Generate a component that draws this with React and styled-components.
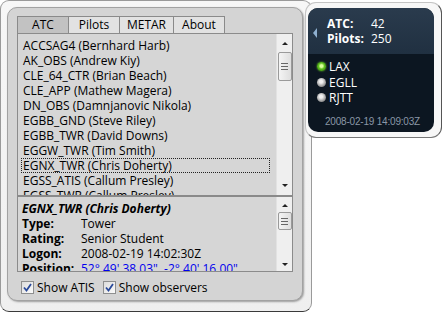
import React from "react";
import styled, { createGlobalStyle } from "styled-components";

const Global = createGlobalStyle`
  html, body { margin: 0; padding: 0; background: #ffffff; }
  body { font-family: "Open Sans", "Noto Sans", sans-serif; font-size: 12px; color: #000; }
  * { box-sizing: border-box; }
`;

const Desktop = styled.div`
  position: relative;
  width: 442px;
  height: 312px;
  overflow: hidden;
  background: #ffffff;
`;

const MainGadget = styled.div`
  position: absolute;
  left: 0;
  top: 0;
  width: 312px;
  height: 312px;
  padding: 6px 8px 10px 6px;
  background: linear-gradient(#f7f7f7, #efefef);
  border: 1px solid #9a9a9a;
  border-bottom-color: #3a3a3a;
  border-radius: 9px;
  display: flex;
`;

const Panel = styled.div`
  flex: 1;
  display: flex;
  flex-direction: column;
  padding: 8px 9px 0 9px;
  background: #d4d4d4;
  border: 1px solid #a2a2a2;
  border-radius: 10px;
  box-shadow: 1px 1px 2px rgba(0, 0, 0, 0.35);
`;

const Tabs = styled.div`
  display: flex;
  height: 17px;
`;

const Tab = styled.div`
  width: ${(p) => p.$w}px;
  height: 17px;
  line-height: 15px;
  text-align: center;
  background: ${(p) => (p.$active ? "#c2c2c2" : "#e2e2e2")};
  border: 1px solid #8a8a8a;
  border-bottom: none;
  margin-left: ${(p) => (p.$first ? 0 : -1)}px;
  font-size: 12px;
`;

const Box = styled.div`
  display: flex;
  flex-direction: column;
  border: 1px solid #8b8b8b;
  background: #d6d6d6;
  height: 239px;
`;

const Section = styled.div`
  display: flex;
  height: ${(p) => p.$h}px;
  overflow: hidden;
`;

const Divider = styled.div`
  height: 2px;
  background: #8a8a8a;
`;

const ListBody = styled.div`
  flex: 1;
  padding: ${(p) => p.$pt}px 6px 0 3px;
  overflow: hidden;
`;

const Row = styled.div`
  height: 15px;
  line-height: 13px;
  padding-left: 1px;
  white-space: nowrap;
  border: 1px dotted ${(p) => (p.$focus ? "#222" : "transparent")};
  display: flex;
  align-items: center;
`;

const Scrollbar = styled.div`
  width: 16px;
  background: #efefef;
  border-left: 1px solid #e2e2e2;
  display: flex;
  flex-direction: column;
  align-items: center;
  padding-top: ${(p) => p.$pt}px;
`;

const Arrow = styled.div`
  width: 0;
  height: 0;
  border-left: 3px solid transparent;
  border-right: 3px solid transparent;
  ${(p) => (p.$down ? "border-top: 3px solid #222;" : "border-bottom: 3px solid #222;")}
`;

const Thumb = styled.div`
  width: 14px;
  height: ${(p) => p.$h}px;
  margin-top: ${(p) => p.$mt}px;
  border: 1px solid #9a9a9a;
  border-radius: 2px;
  background: linear-gradient(90deg, #f4f4f4, #dedede);
  display: flex;
  flex-direction: column;
  align-items: center;
  justify-content: center;
  gap: 2px;
`;

const Grip = styled.div`
  width: 7px;
  height: 1px;
  background: #666;
`;

const Spacer = styled.div`
  flex: ${(p) => (p.$fixed ? `0 0 ${p.$fixed}px` : 1)};
`;

const Heading = styled.div`
  height: 15px;
  line-height: 15px;
  font-weight: bold;
  font-style: italic;
  padding-left: 1px;
  white-space: nowrap;
`;

const InfoRow = styled.div`
  display: grid;
  grid-template-columns: 59px 1fr;
  height: 15px;
  line-height: 15px;
  padding-left: 1px;
  white-space: nowrap;
`;

const Label = styled.span`
  font-weight: bold;
`;

const Link = styled.a`
  color: #0000ee;
  text-decoration: underline;
`;

const CheckRow = styled.div`
  display: flex;
  align-items: center;
  gap: 8px;
  height: 29px;
  padding: 2px 0 0 4px;
`;

const Check = styled.label`
  display: flex;
  align-items: center;
  gap: 3px;
`;

const Box13 = styled.span`
  width: 13px;
  height: 13px;
  border: 1px solid #8e8f8f;
  background: linear-gradient(135deg, #dcdcdc, #fbfbfb);
  display: flex;
  align-items: center;
  justify-content: center;
`;

const SideGadget = styled.div`
  position: absolute;
  left: 305px;
  top: 2px;
  width: 137px;
  height: 136px;
  padding: 5px 7px 5px 2px;
  background: #f7f7f7;
  border: 1px solid #c4c4c4;
  border-right-color: #555;
  border-bottom-color: #777;
  border-radius: 11px;
  display: flex;
`;

const Dark = styled.div`
  flex: 1;
  border-radius: 10px;
  overflow: hidden;
  display: flex;
  flex-direction: column;
  background: #0c1621;
  color: #fff;
`;

const Header = styled.div`
  height: 46px;
  background: linear-gradient(#2a3b4d, #203041);
  display: flex;
  align-items: center;
  padding-left: 5px;
  gap: 10px;
`;

const LeftArrow = styled.div`
  width: 0;
  height: 0;
  border-top: 5px solid transparent;
  border-bottom: 5px solid transparent;
  border-right: 4px solid #8fb0d0;
  margin-top: 4px;
`;

const Stats = styled.div`
  display: grid;
  grid-template-columns: 44px auto;
  line-height: 15px;
  font-weight: bold;
`;

const Value = styled.span`
  font-weight: normal;
`;

const Airports = styled.div`
  padding: 5px 0 0 9px;
  display: flex;
  flex-direction: column;
`;

const Airport = styled.div`
  display: flex;
  align-items: center;
  gap: 3px;
  height: 15.5px;
  line-height: 15px;
  font-size: 12px;
`;

const Dot = styled.span`
  width: 9px;
  height: 9px;
  border-radius: 50%;
  background: ${(p) =>
    p.$on
      ? "radial-gradient(circle at 50% 45%, #d8ff9a 0 20%, #5fbf1e 45%, #2e7a0c 100%)"
      : "radial-gradient(circle at 45% 40%, #f0f0f0 0 20%, #a0a0a0 60%, #606060 100%)"};
  box-shadow: ${(p) => (p.$on ? "0 0 2px #6fcf2a" : "none")};
`;

const Stamp = styled.div`
  margin-top: 10px;
  padding-left: 17px;
  font-family: "Liberation Sans Narrow", "Liberation Sans", sans-serif;
  font-size: 10px;
  letter-spacing: -0.2px;
  color: #8a96a6;
`;

const items = [
  "ACCSAG4 (Bernhard Harb)",
  "AK_OBS (Andrew Kiy)",
  "CLE_64_CTR (Brian Beach)",
  "CLE_APP (Mathew Magera)",
  "DN_OBS (Damnjanovic Nikola)",
  "EGBB_GND (Steve Riley)",
  "EGBB_TWR (David Downs)",
  "EGGW_TWR (Tim Smith)",
  "EGNX_TWR (Chris Doherty)",
  "EGSS_ATIS (Callum Presley)",
  "EGSS_TWR (Callum Presley)",
];

const Tick = () => (
  <svg width="9" height="9" viewBox="0 0 9 9">
    <path d="M1 4.5 L3.5 7.5 L8 1" fill="none" stroke="#2a4a9a" strokeWidth="1.8" />
  </svg>
);

export default function App() {
  return (
    <Desktop>
      <Global />
      <MainGadget>
        <Panel>
          <Tabs>
            <Tab $w={52} $active $first>ATC</Tab>
            <Tab $w={52}>Pilots</Tab>
            <Tab $w={55}>METAR</Tab>
            <Tab $w={52}>About</Tab>
          </Tabs>
          <Box>
            <Section $h={161}>
              <ListBody $pt={4}>
                {items.map((t, i) => (
                  <Row key={t} $focus={i === 8}>{t}</Row>
                ))}
              </ListBody>
              <Scrollbar $pt={8}>
                <Arrow />
                <Thumb $h={29} $mt={7}>
                  <Grip /><Grip /><Grip />
                </Thumb>
                <Spacer />
                <Arrow $down />
                <Spacer $fixed={8} />
              </Scrollbar>
            </Section>
            <Divider />
            <Section $h={74}>
              <ListBody $pt={4}>
                <Heading>EGNX_TWR (Chris Doherty)</Heading>
                <InfoRow><Label>Type:</Label><span>Tower</span></InfoRow>
                <InfoRow><Label>Rating:</Label><span>Senior Student</span></InfoRow>
                <InfoRow><Label>Logon:</Label><span>2008-02-19 14:02:30Z</span></InfoRow>
                <InfoRow>
                  <Label>Position:</Label>
                  <Link href="#">52° 49' 38.03", -2° 40' 16.00"</Link>
                </InfoRow>
              </ListBody>
              <Scrollbar $pt={7}>
                <Arrow />
                <Thumb $h={18} $mt={5}>
                  <Grip /><Grip /><Grip />
                </Thumb>
                <Spacer />
                <Arrow $down />
                <Spacer $fixed={5} />
              </Scrollbar>
            </Section>
          </Box>
          <CheckRow>
            <Check><Box13><Tick /></Box13>Show ATIS</Check>
            <Check><Box13><Tick /></Box13>Show observers</Check>
          </CheckRow>
        </Panel>
      </MainGadget>
      <SideGadget>
        <Dark>
          <Header>
            <LeftArrow />
            <Stats>
              <span>ATC:</span><Value>42</Value>
              <span>Pilots:</span><Value>250</Value>
            </Stats>
          </Header>
          <Airports>
            <Airport><Dot $on />LAX</Airport>
            <Airport><Dot />EGLL</Airport>
            <Airport><Dot />RJTT</Airport>
          </Airports>
          <Stamp>2008-02-19 14:09:03Z</Stamp>
        </Dark>
      </SideGadget>
    </Desktop>
  );
}
